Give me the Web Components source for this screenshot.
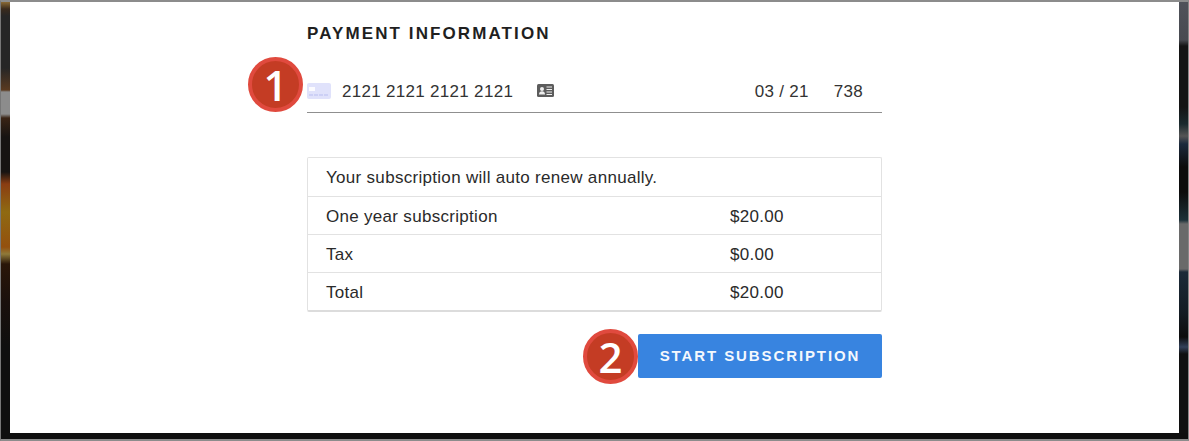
<!DOCTYPE html>
<html>
<head>
<meta charset="utf-8">
<title>Payment information</title>
<style>
  html, body { margin: 0; padding: 0; background: #0f0f0f; }
  body { font-family: "Liberation Sans", Arial, sans-serif; }
</style>
</head>
<body>
<screen-frame>
  <payment-form>
    <card-field slot="card" number="2121 2121 2121 2121" expiry="03 / 21" cvc="738"></card-field>
    <summary-row slot="rows" wide>Your subscription will auto renew annually.</summary-row>
    <summary-row slot="rows" amount="$20.00">One year subscription</summary-row>
    <summary-row slot="rows" amount="$0.00">Tax</summary-row>
    <summary-row slot="rows" amount="$20.00" last>Total</summary-row>
    <step-badge slot="card-badge">1</step-badge>
    <step-badge slot="button-badge">2</step-badge>
    <submit-button slot="button">START SUBSCRIPTION</submit-button>
  </payment-form>
</screen-frame>

<script>
class ScreenFrame extends HTMLElement {
  connectedCallback() {
    this.attachShadow({ mode: 'open' });
    this.shadowRoot.innerHTML = `
      <style>
        :host {
          display: block;
          width: 1189px;
          height: 441px;
          box-sizing: border-box;
          border-top: 2px solid #8c8c8c;
          border-bottom: 2px solid #8c8c8c;
          border-left: 1px solid #777;
          border-right: 1px solid #888;
          background: #0f0f0f;
        }
        .wrap {
          display: flex;
          height: 431px;
        }
        .strip { flex: none; }
        .left {
          width: 9px;
          background: linear-gradient(#8a6a35 0, #3a2a1c 7px, #262626 14px, #262626 66px, #5a3a20 88px, #8c8c8c 90px, #8c8c8c 112px, #3a2415 116px, #171412 135px, #171412 170px, #8a3d12 182px, #8f6a12 210px, #94500e 245px, #8f7a3a 252px, #2a1608 262px, #1a100c 300px, #0f0f0f 345px);
        }
        .right {
          width: 9px;
          background: linear-gradient(#50525a 0, #484a50 38px, #141414 44px, #141414 105px, #1a2a2e 122px, #555 134px, #1c2a3c 142px, #0c0c0c 165px, #0c0c0c 190px, #1c3038 218px, #6a6a6a 222px, #6a6a6a 267px, #1c2a38 270px, #141c24 310px, #0c0c0c 335px, #33415a 345px, #101010 352px);
        }
        .panel {
          flex: 1;
          background: #fff;
          min-width: 0;
        }
      </style>
      <div class="wrap">
        <div class="strip left"></div>
        <div class="panel"><slot></slot></div>
        <div class="strip right"></div>
      </div>
    `;
  }
}
customElements.define('screen-frame', ScreenFrame);

class PaymentForm extends HTMLElement {
  connectedCallback() {
    this.attachShadow({ mode: 'open' });
    this.shadowRoot.innerHTML = `
      <style>
        :host {
          display: block;
          width: 575px;
          margin-left: 297px;
          padding-top: 22px;
          color: #222;
        }
        h2 {
          margin: 0;
          font: bold 17px/19px "Liberation Sans", Arial, sans-serif;
          letter-spacing: 2.1px;
          color: #1f1f1f;
        }
        .card {
          position: relative;
          margin-top: 26px;
        }
        .table {
          margin-top: 44px;
          border: 1px solid #e2e2e2;
          border-bottom: 2px solid #dcdcdc;
          border-radius: 2px;
        }
        .actions {
          position: relative;
          display: flex;
          justify-content: flex-end;
          margin-top: 22px;
        }
        .badge-1 { position: absolute; left: -59px; top: -12px; }
        .badge-2 { position: absolute; right: 244px; top: -5px; }
      </style>
      <h2>PAYMENT INFORMATION</h2>
      <div class="card">
        <slot name="card"></slot>
        <div class="badge-1"><slot name="card-badge"></slot></div>
      </div>
      <div class="table"><slot name="rows"></slot></div>
      <div class="actions">
        <slot name="button"></slot>
        <div class="badge-2"><slot name="button-badge"></slot></div>
      </div>
    `;
  }
}
customElements.define('payment-form', PaymentForm);

class CardField extends HTMLElement {
  connectedCallback() {
    this.attachShadow({ mode: 'open' });
    this.shadowRoot.innerHTML = `
      <style>
        :host {
          display: flex;
          align-items: center;
          height: 43px;
          border-bottom: 1px solid #8f8f8f;
          font: 17px "Liberation Sans", Arial, sans-serif;
          letter-spacing: 0.3px;
          color: #333;
        }
        svg { display: block; flex: none; }
        span { padding-top: 2px; }
        .number { margin-left: 11px; }
        .id { margin-left: 24px; }
        .expiry { margin-left: auto; }
        .cvc { margin-left: 25px; margin-right: 19px; }
      </style>
      <svg width="24" height="16" viewBox="0 0 24 16">
        <rect width="24" height="16" rx="2" fill="#e0e2fb"/>
        <rect x="2" y="4" width="6" height="4" fill="#fbfbff"/>
        <path d="M2 12h20" stroke="#b9bef0" stroke-width="1" stroke-dasharray="4 1"/>
      </svg>
      <span class="number">${this.getAttribute('number')}</span>
      <svg class="id" width="17" height="13" viewBox="0 0 17 13">
        <rect width="17" height="13" rx="1.5" fill="#5c5c5c"/>
        <circle cx="5" cy="5" r="2" fill="#eee"/>
        <path d="M2 10.5c0-2.400 1.300-3.200 3-3.200s3 .8 3 3.200z" fill="#eee"/>
        <path d="M9.500 3h5.500M9.500 5.500h5.500M9.500 8h5.500M9.500 10.500h5.500" stroke="#eee" stroke-width="1.100"/>
      </svg>
      <span class="expiry">${this.getAttribute('expiry')}</span>
      <span class="cvc">${this.getAttribute('cvc')}</span>
    `;
  }
}
customElements.define('card-field', CardField);

class SummaryRow extends HTMLElement {
  connectedCallback() {
    this.attachShadow({ mode: 'open' });
    const amount = this.getAttribute('amount');
    this.shadowRoot.innerHTML = `
      <style>
        :host {
          display: grid;
          grid-template-columns: 404px 1fr;
          align-items: center;
          height: 38px;
          padding-left: 18px;
          padding-top: 2px;
          box-sizing: border-box;
          border-bottom: 1px solid #e2e2e2;
          font: 17px "Liberation Sans", Arial, sans-serif;
          letter-spacing: 0.3px;
          color: #2a2a2a;
        }
        :host([wide]) { height: 39px; grid-template-columns: 1fr; }
        :host([last]) { border-bottom: none; height: 37px; }
      </style>
      <span><slot></slot></span>
      ${amount ? `<span>${amount}</span>` : ''}
    `;
  }
}
customElements.define('summary-row', SummaryRow);

class StepBadge extends HTMLElement {
  connectedCallback() {
    this.attachShadow({ mode: 'open' });
    this.shadowRoot.innerHTML = `
      <style>
        :host {
          display: flex;
          align-items: center;
          justify-content: center;
          width: 55px;
          height: 55px;
          box-sizing: border-box;
          border-radius: 50%;
          border: 4px solid #e04a3e;
          background: #c43c24;
          color: #fff;
          font: 600 42px/1 "Open Sans", sans-serif;
        }
      </style>
      <slot></slot>
    `;
  }
}
customElements.define('step-badge', StepBadge);

class SubmitButton extends HTMLElement {
  connectedCallback() {
    this.attachShadow({ mode: 'open' });
    this.shadowRoot.innerHTML = `
      <style>
        :host {
          display: flex;
          align-items: center;
          justify-content: center;
          width: 244px;
          height: 44px;
          box-sizing: border-box;
          padding-bottom: 2px;
          border-radius: 2px;
          background: #3884e0;
          color: #f4f8fd;
          font: bold 15px "Liberation Sans", Arial, sans-serif;
          letter-spacing: 1.900px;
        }
      </style>
      <slot></slot>
    `;
  }
}
customElements.define('submit-button', SubmitButton);
</script>
</body>
</html>
